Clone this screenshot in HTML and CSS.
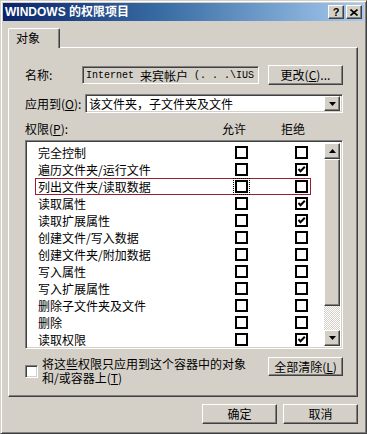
FILE: index.html
```html
<!DOCTYPE html>
<html lang="zh-CN">
<head>
<meta charset="utf-8">
<link rel="stylesheet" href="styles.css">
</head>
<body>
<div class="window">
  <div class="titlebar">
    <span class="title">WINDOWS 的权限项目</span>
    <div class="tb-buttons">
      <span class="raised tb-btn help">?</span>
      <span class="raised tb-btn close"><svg width="8" height="7" viewBox="0 0 8 7"><path d="M0.5 0.5 L7.5 6.5 M7.5 0.5 L0.5 6.5" stroke="#000" stroke-width="1.6" fill="none"/></svg></span>
    </div>
  </div>
  <div class="content">
    <div class="tabs"><div class="tab">对象</div></div>
    <div class="panel">
      <div class="name-row">
        <span class="label name-label">名称:</span>
        <div class="sunken field"><span class="mono">Internet </span><span class="cjk">来宾帐户</span><span class="mono"> (. . .\IUS</span></div>
        <span class="raised btn change">更改(<u>C</u>)...</span>
      </div>
      <div class="apply-row">
        <span class="label apply-label">应用到(<u>O</u>):</span>
        <div class="sunken combo">
          <span class="combo-text">该文件夹，子文件夹及文件</span>
          <span class="raised combo-btn"><svg width="7" height="4" viewBox="0 0 7 4"><path d="M0 0 H7 L3.5 4 Z" fill="#000"/></svg></span>
        </div>
      </div>
      <div class="perm-header">
        <span class="h-name">权限(<u>P</u>):</span>
        <span class="h-allow">允许</span>
        <span class="h-deny">拒绝</span>
      </div>
      <div class="sunken list">
        <div class="items">
          <div class="row"><div class="cell"><span class="txt">完全控制</span><span class="cb"></span><span class="cb"></span></div></div>
          <div class="row"><div class="cell"><span class="txt">遍历文件夹/运行文件</span><span class="cb"></span><span class="cb checked"><svg width="9" height="9" viewBox="0 0 9 9"><path d="M1.5 4 L3.5 6.2 L7.8 1.8" stroke="#000" stroke-width="2" fill="none"/></svg></span></div></div>
          <div class="row"><div class="cell marked"><span class="txt">列出文件夹/读取数据</span><span class="cb focus"></span><span class="cb"></span></div></div>
          <div class="row"><div class="cell"><span class="txt">读取属性</span><span class="cb"></span><span class="cb checked"><svg width="9" height="9" viewBox="0 0 9 9"><path d="M1.5 4 L3.5 6.2 L7.8 1.8" stroke="#000" stroke-width="2" fill="none"/></svg></span></div></div>
          <div class="row"><div class="cell"><span class="txt">读取扩展属性</span><span class="cb"></span><span class="cb checked"><svg width="9" height="9" viewBox="0 0 9 9"><path d="M1.5 4 L3.5 6.2 L7.8 1.8" stroke="#000" stroke-width="2" fill="none"/></svg></span></div></div>
          <div class="row"><div class="cell"><span class="txt">创建文件/写入数据</span><span class="cb"></span><span class="cb"></span></div></div>
          <div class="row"><div class="cell"><span class="txt">创建文件夹/附加数据</span><span class="cb"></span><span class="cb"></span></div></div>
          <div class="row"><div class="cell"><span class="txt">写入属性</span><span class="cb"></span><span class="cb"></span></div></div>
          <div class="row"><div class="cell"><span class="txt">写入扩展属性</span><span class="cb"></span><span class="cb"></span></div></div>
          <div class="row"><div class="cell"><span class="txt">删除子文件夹及文件</span><span class="cb"></span><span class="cb"></span></div></div>
          <div class="row"><div class="cell"><span class="txt">删除</span><span class="cb"></span><span class="cb"></span></div></div>
          <div class="row"><div class="cell"><span class="txt">读取权限</span><span class="cb"></span><span class="cb checked"><svg width="9" height="9" viewBox="0 0 9 9"><path d="M1.5 4 L3.5 6.2 L7.8 1.8" stroke="#000" stroke-width="2" fill="none"/></svg></span></div></div>
        </div>
        <div class="scrollbar">
          <span class="raised sb-btn"><svg width="7" height="4" viewBox="0 0 7 4"><path d="M0 4 H7 L3.5 0 Z" fill="#000"/></svg></span>
          <span class="raised thumb"></span>
          <span class="track"></span>
          <span class="raised sb-btn"><svg width="7" height="4" viewBox="0 0 7 4"><path d="M0 0 H7 L3.5 4 Z" fill="#000"/></svg></span>
        </div>
      </div>
      <div class="bottom-row">
        <div class="inherit">
          <span class="sunken inh-cb"></span>
          <span class="inh-text"><span class="line">将这些权限只应用到这个容器中的对象</span><span class="line">和/或容器上(<u>T</u>)</span></span>
        </div>
        <span class="raised btn clear">全部清除(<u>L</u>)</span>
      </div>
    </div>
    <div class="dialog-buttons">
      <span class="raised btn dlg">确定</span>
      <span class="raised btn dlg">取消</span>
    </div>
  </div>
</div>
</body>
</html>
```

FILE: styles.css
```css
* { box-sizing: border-box; }
body {
  margin: 0;
  background: #d4d0c8;
}
.window {
  width: 367px;
  height: 434px;
  background: #d4d0c8;
  border: 1px solid;
  border-color: #d4d0c8 #404040 #404040 #d4d0c8;
  box-shadow: inset 1px 1px #fff, inset -1px -1px #808080;
  padding: 2px;
  display: flex;
  flex-direction: column;
  font: 12px/14px "Noto Sans CJK SC", sans-serif;
  color: #000;
}
.raised {
  background: #d4d0c8;
  border: 1px solid;
  border-color: #fff #404040 #404040 #fff;
  box-shadow: inset -1px -1px #808080;
}
.sunken {
  border: 1px solid;
  border-color: #808080 #fff #fff #808080;
  box-shadow: inset 1px 1px #404040, inset -1px -1px #d4d0c8;
}
.titlebar {
  height: 18px;
  background: linear-gradient(to right, #0a246a 0%, #3a6ea5 45%, #a6caf0 100%);
  display: flex;
  align-items: center;
  padding-left: 2px;
}
.title {
  color: #fff;
  font: bold 12px/14px "Liberation Sans", "Noto Sans CJK SC", sans-serif;
}
.tb-buttons {
  margin-left: auto;
  margin-right: 2px;
  display: flex;
  gap: 2px;
}
.tb-btn {
  width: 16px;
  height: 14px;
  display: flex;
  align-items: center;
  justify-content: center;
  font: bold 11px/12px "Liberation Sans", sans-serif;
}
.content {
  flex: 1;
  padding: 7px 6px 0 5px;
  display: flex;
  flex-direction: column;
}
.tabs {
  height: 19px;
  display: flex;
}
.tab {
  position: relative;
  z-index: 1;
  width: 52px;
  height: 20px;
  background: #d4d0c8;
  border-top: 1px solid #fff;
  border-left: 1px solid #fff;
  border-right: 1px solid #404040;
  box-shadow: inset -1px 0 #808080;
  border-radius: 2px 2px 0 0;
  padding: 2px 0 0 7px;
  line-height: 14px;
}
.panel {
  height: 350px;
  border: 1px solid;
  border-color: #fff #404040 #404040 #fff;
  box-shadow: inset -1px -1px #808080;
  padding: 17px 14px 0 16px;
  display: flex;
  flex-direction: column;
}
.name-row {
  height: 20px;
  display: flex;
  align-items: center;
}
.name-label { width: 57px; }
.field {
  width: 177px;
  height: 18px;
  background: #d4d0c8;
  padding: 1px 0 0 3px;
  white-space: pre;
  display: flex;
  align-items: center;
}
.mono { font: 10px/13px "Liberation Mono", monospace; }
.cjk { font: 12px/14px "Noto Sans CJK SC", sans-serif; }
.btn {
  display: flex;
  align-items: center;
  justify-content: center;
}
.change {
  width: 75px;
  height: 20px;
  margin-left: 9px;
}
.apply-row {
  margin-top: 9px;
  height: 19px;
  display: flex;
  align-items: center;
}
.apply-label { width: 60px; }
.combo {
  flex: 1;
  height: 19px;
  background: #fff;
  display: flex;
  align-items: center;
  padding: 2px;
}
.combo-text {
  flex: 1;
  padding-left: 1px;
}
.combo-btn {
  width: 16px;
  height: 15px;
  display: flex;
  align-items: center;
  justify-content: center;
}
.perm-header {
  margin-top: 9px;
  height: 14px;
  display: flex;
  align-items: center;
}
.h-name { width: 197px; }
.h-allow { width: 59px; }
.list {
  margin-top: 4px;
  height: 209px;
  background: #fff;
  display: flex;
  padding: 2px;
}
.items {
  flex: 1;
  padding-top: 1px;
}
.row {
  height: 17px;
  padding-left: 7px;
}
.cell {
  width: 276px;
  height: 17px;
  display: grid;
  grid-template-columns: 200px 60px 16px;
  align-items: center;
}
.cell.marked {
  box-shadow: inset 0 0 0 1px #9a1f35;
}
.txt { padding-left: 3px; }
.cb {
  width: 13px;
  height: 13px;
  border: 2px solid #000;
  background: #fff;
  display: flex;
  align-items: center;
  justify-content: center;
}
.cb svg { display: block; }
.cb.focus {
  outline: 1px dotted #000;
  outline-offset: 1px;
}
.scrollbar {
  width: 16px;
  display: flex;
  flex-direction: column;
}
.sb-btn {
  height: 16px;
  display: flex;
  align-items: center;
  justify-content: center;
}
.thumb { height: 147px; }
.track {
  flex: 1;
  background: repeating-conic-gradient(#d4d0c8 0 25%, #fff 0 50%) 0 0 / 2px 2px;
}
.bottom-row {
  margin-top: 8px;
  display: flex;
  align-items: flex-start;
}
.inherit {
  display: flex;
  align-items: center;
}
.inh-cb {
  width: 13px;
  height: 13px;
  background: #fff;
  margin-right: 4px;
}
.inh-text {
  display: flex;
  flex-direction: column;
}
.line {
  height: 14px;
  line-height: 14px;
}
.clear {
  margin-left: auto;
  width: 75px;
  height: 19px;
}
.dialog-buttons {
  margin-top: 7px;
  display: flex;
  justify-content: flex-end;
  gap: 6px;
}
.dlg {
  width: 75px;
  height: 20px;
}
```
